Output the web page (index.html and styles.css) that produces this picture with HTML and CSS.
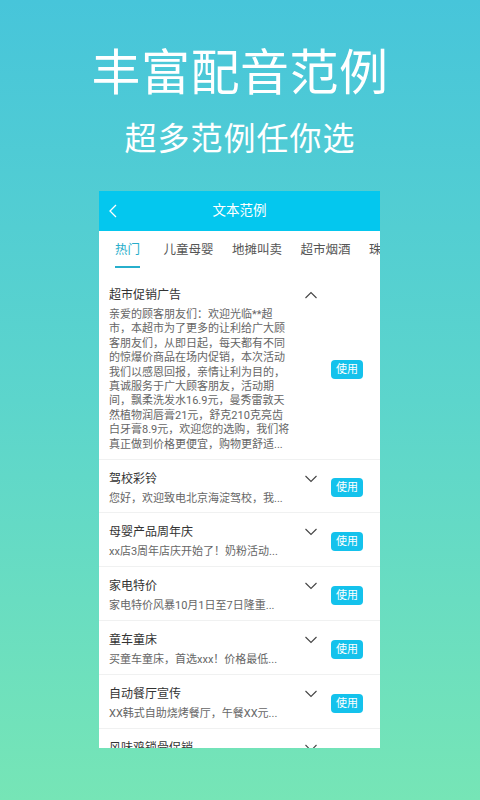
FILE: index.html
```html
<!DOCTYPE html>
<html lang="zh-CN">
<head>
<meta charset="utf-8">
<title>丰富配音范例</title>
<link rel="stylesheet" href="styles.css">
</head>
<body>
<div class="page">
  <h1 class="headline">丰富配音范例</h1>
  <p class="subline">超多范例任你选</p>
  <div class="phone">
    <div class="appbar">
      <svg class="back" width="8" height="14" viewBox="0 0 8 14"><path d="M7 1 L1 7 L7 13" fill="none" stroke="#fff" stroke-width="1.3"/></svg>
      <span class="appbar-title">文本范例</span>
    </div>
    <div class="tabs">
      <div class="tab active">热门</div>
      <div class="tab">儿童母婴</div>
      <div class="tab">地摊叫卖</div>
      <div class="tab">超市烟酒</div>
      <div class="tab">珠宝首饰</div>
    </div>
    <div class="list">
      <div class="item">
        <div class="text">
          <div class="title">超市促销广告</div>
          <div class="body">亲爱的顾客朋友们：欢迎光临**超<br>市，本超市为了更多的让利给广大顾<br>客朋友们，从即日起，每天都有不同<br>的惊爆价商品在场内促销，本次活动<br>我们以感恩回报，亲情让利为目的，<br>真诚服务于广大顾客朋友，活动期<br>间，飘柔洗发水16.9元，曼秀雷敦天<br>然植物润唇膏21元，舒克210克亮齿<br>白牙膏8.9元，欢迎您的选购，我们将<br>真正做到价格更便宜，购物更舒适...</div>
        </div>
        <svg class="chev" width="12" height="18" viewBox="0 0 12 18"><path d="M0.5 12 L6 6.5 L11.5 12" fill="none" stroke="#444" stroke-width="1.1"/></svg>
        <div class="use">使用</div>
      </div>
      <div class="item">
        <div class="text">
          <div class="title">驾校彩铃</div>
          <div class="body">您好，欢迎致电北京海淀驾校，我...</div>
        </div>
        <svg class="chev" width="12" height="18" viewBox="0 0 12 18"><path d="M0.5 6 L6 11.5 L11.5 6" fill="none" stroke="#444" stroke-width="1.1"/></svg>
        <div class="use">使用</div>
      </div>
      <div class="item">
        <div class="text">
          <div class="title">母婴产品周年庆</div>
          <div class="body">xx店3周年店庆开始了！奶粉活动...</div>
        </div>
        <svg class="chev" width="12" height="18" viewBox="0 0 12 18"><path d="M0.5 6 L6 11.5 L11.5 6" fill="none" stroke="#444" stroke-width="1.1"/></svg>
        <div class="use">使用</div>
      </div>
      <div class="item">
        <div class="text">
          <div class="title">家电特价</div>
          <div class="body">家电特价风暴10月1日至7日隆重...</div>
        </div>
        <svg class="chev" width="12" height="18" viewBox="0 0 12 18"><path d="M0.5 6 L6 11.5 L11.5 6" fill="none" stroke="#444" stroke-width="1.1"/></svg>
        <div class="use">使用</div>
      </div>
      <div class="item">
        <div class="text">
          <div class="title">童车童床</div>
          <div class="body">买童车童床，首选xxx！价格最低...</div>
        </div>
        <svg class="chev" width="12" height="18" viewBox="0 0 12 18"><path d="M0.5 6 L6 11.5 L11.5 6" fill="none" stroke="#444" stroke-width="1.1"/></svg>
        <div class="use">使用</div>
      </div>
      <div class="item">
        <div class="text">
          <div class="title">自动餐厅宣传</div>
          <div class="body">XX韩式自助烧烤餐厅，午餐XX元...</div>
        </div>
        <svg class="chev" width="12" height="18" viewBox="0 0 12 18"><path d="M0.5 6 L6 11.5 L11.5 6" fill="none" stroke="#444" stroke-width="1.1"/></svg>
        <div class="use">使用</div>
      </div>
      <div class="item">
        <div class="text">
          <div class="title">风味鸡锁骨促销</div>
          <div class="body">风味鸡锁骨限时特价，欢迎品尝...</div>
        </div>
        <svg class="chev" width="12" height="18" viewBox="0 0 12 18"><path d="M0.5 6 L6 11.5 L11.5 6" fill="none" stroke="#444" stroke-width="1.1"/></svg>
        <div class="use">使用</div>
      </div>
    </div>
  </div>
</div>
</body>
</html>
```

FILE: styles.css
```css
* { box-sizing: border-box; }
html, body { margin: 0; padding: 0; }
body {
  width: 480px;
  height: 800px;
  overflow: hidden;
  font-family: Roboto, "Noto Sans CJK SC", sans-serif;
  background: linear-gradient(180deg, #47c5da 0%, #5cd5cc 50%, #76e5b6 100%);
}
.page {
  display: flex;
  flex-direction: column;
  align-items: center;
  padding-top: 44px;
}
.headline {
  margin: 0;
  font-family: "Noto Sans CJK SC", sans-serif;
  font-weight: 400;
  font-size: 49px;
  line-height: 50px;
  color: #fff;
  letter-spacing: 0.5px;
}
.subline {
  margin: 25px 0 0;
  font-family: "Noto Sans CJK SC", sans-serif;
  font-size: 32px;
  line-height: 34px;
  color: #fff;
  letter-spacing: 1px;
}
.phone {
  margin-top: 38px;
  width: 281px;
  height: 557px;
  margin-left: -1px;
  background: #fff;
  overflow: hidden;
  display: flex;
  flex-direction: column;
}
.appbar {
  height: 40px;
  flex: none;
  background: #04c7ee;
  display: flex;
  align-items: center;
  justify-content: center;
  position: relative;
}
.back {
  position: absolute;
  left: 10px;
  top: 13px;
}
.appbar-title {
  color: #fff;
  font-size: 13.5px;
  line-height: 16px;
  margin-top: -2px;
}
.tabs {
  height: 45px;
  flex: none;
  display: flex;
  padding-left: 16px;
  gap: 18.5px;
  overflow: hidden;
  white-space: nowrap;
}
.tab {
  flex: none;
  padding-top: 11px;
  font-size: 12.5px;
  line-height: 16px;
  color: #555;
}
.tab.active {
  color: #27adca;
  margin-right: 5px;
}
.tab.active::after {
  content: "";
  display: block;
  margin-top: 8px;
  height: 2px;
  background: #27afcc;
}
.list {
  display: flex;
  flex-direction: column;
}
.item {
  display: flex;
  align-items: center;
  padding: 10px 16px 6.5px 10px;
  border-bottom: 1px solid #f0f1f1;
}
.text {
  width: 177px;
  flex: none;
}
.title {
  font-size: 12px;
  line-height: 18px;
  color: #333;
}
.body {
  margin-top: 4px;
  font-size: 11px;
  line-height: 14.4px;
  color: #666;
  white-space: nowrap;
}
.chev {
  flex: none;
  align-self: flex-start;
  margin-left: 19px;
}
.use {
  flex: none;
  margin-left: 14px;
  width: 32px;
  height: 19px;
  border-radius: 4px;
  background: #14c2ec;
  color: #fff;
  font-size: 11px;
  line-height: 19px;
  text-align: center;
}
```
